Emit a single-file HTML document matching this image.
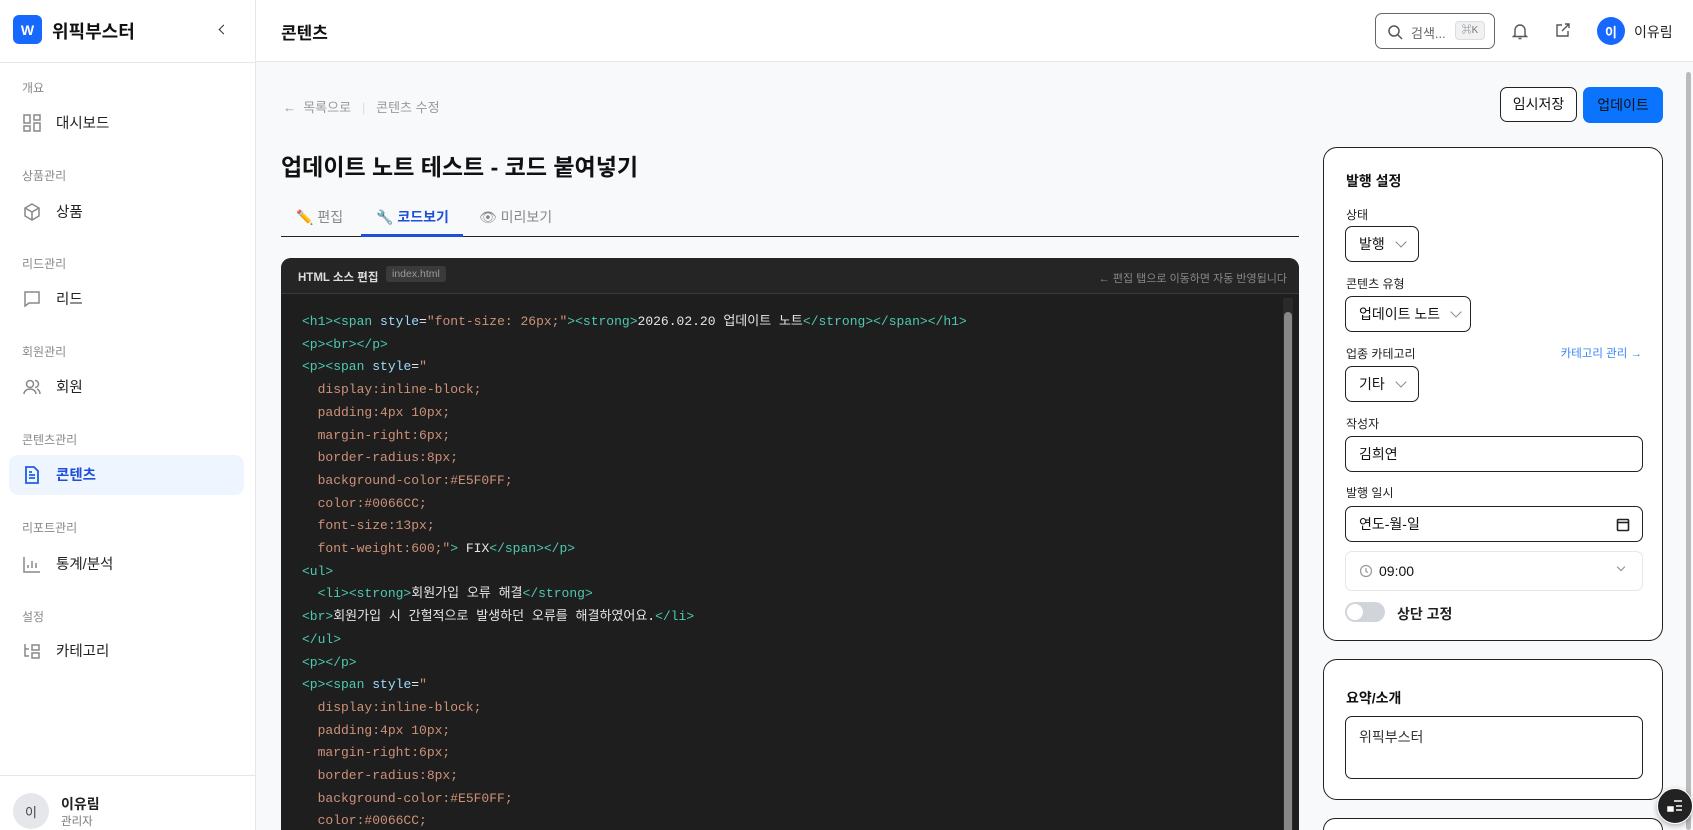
<!DOCTYPE html>
<html><head><meta charset="utf-8"><style>
*{box-sizing:border-box;margin:0;padding:0}
html,body{width:1693px;height:830px;overflow:hidden}
body{font-family:"Liberation Sans","Noto Sans CJK KR",sans-serif;background:#f8f9fb;color:#111;position:relative}
.abs{position:absolute}
.side{left:0;top:0;width:256px;height:830px;background:#fff;border-right:1px solid #e5e7eb}
.sec{position:absolute;left:22px;font-size:12px;color:#888}
.item{position:absolute;left:22px;font-size:14.5px;color:#222;display:flex;align-items:center;gap:14px}
.item svg{width:20px;height:20px;stroke:#888;fill:none;stroke-width:1.5}
.hdr{left:256px;top:0;right:0;height:62px;background:#fff;border-bottom:1px solid #e5e7eb}
.code{font-family:"Liberation Mono","Noto Sans CJK KR",monospace;font-size:13px;color:#e6e6e6;white-space:pre;line-height:22.7px}
.t{color:#4ec9b0}.a{color:#9cdcfe}.s{color:#ce9178}
.card{background:#fff;border:1px solid #222;border-radius:14px}
.lbl{position:absolute;left:22px;font-size:12px;color:#222}
.sel{position:absolute;left:21px;border:1px solid #222;border-radius:7px;height:36px;font-size:14px;display:flex;align-items:center;padding-left:13px;gap:12px}
.chev{width:8px;height:8px;border-right:1.3px solid #888;border-bottom:1.3px solid #888;transform:rotate(45deg);margin-top:-4px}
</style></head><body>
<div class="abs side">
 <div class="abs" style="left:13px;top:15px;width:29px;height:29px;background:#1668ff;border-radius:6px;color:#fff;font-weight:bold;font-size:14px;display:flex;align-items:center;justify-content:center">W</div>
 <div class="abs" style="left:52px;top:18px;font-size:18px;font-weight:bold">위픽부스터</div>
 <div class="abs" style="left:220px;top:26px;width:7px;height:7px;border-left:1.5px solid #333;border-bottom:1.5px solid #333;transform:rotate(45deg)"></div>
 <div class="abs" style="left:0;top:62px;width:256px;border-top:1px solid #e5e7eb"></div>
 <div class="sec" style="top:79px">개요</div>
 <div class="item" style="top:112px"><svg viewBox="0 0 20 20"><rect x="2" y="2" width="6" height="8"/><rect x="12" y="2" width="6" height="5"/><rect x="2" y="13" width="6" height="5"/><rect x="12" y="10" width="6" height="8"/></svg>대시보드</div>
 <div class="sec" style="top:167px">상품관리</div>
 <div class="item" style="top:201px"><svg viewBox="0 0 20 20"><path d="M10 2l7 4v8l-7 4-7-4V6z M3 6l7 4 7-4 M10 10v8"/></svg>상품</div>
 <div class="sec" style="top:255px">리드관리</div>
 <div class="item" style="top:288px"><svg viewBox="0 0 20 20"><path d="M3 3h14v11H7l-4 3z"/></svg>리드</div>
 <div class="sec" style="top:343px">회원관리</div>
 <div class="item" style="top:376px"><svg viewBox="0 0 20 20"><circle cx="8" cy="7" r="3.5"/><path d="M2 17c0-3 3-5 6-5s6 2 6 5 M13 3.5a3.5 3.5 0 010 7 M15 12c2 1 3 3 3 5"/></svg>회원</div>
 <div class="sec" style="top:431px">콘텐츠관리</div>
 <div class="abs" style="left:9px;top:455px;width:235px;height:40px;background:#eef5ff;border-radius:9px"></div>
 <div class="item" style="top:464px;color:#1d4fd8;font-weight:bold"><svg viewBox="0 0 20 20" style="stroke:#1d5fe8;stroke-width:1.8"><path d="M4 2h8l4 4v12H4z M7 10h6 M7 13h6 M7 7h3"/></svg>콘텐츠</div>
 <div class="sec" style="top:519px">리포트관리</div>
 <div class="item" style="top:553px"><svg viewBox="0 0 20 20"><path d="M2 3v15h16 M6 14v-3 M10 14V7 M14 14v-5"/></svg>통계/분석</div>
 <div class="sec" style="top:608px">설정</div>
 <div class="item" style="top:640px"><svg viewBox="0 0 20 20"><path d="M3 3v12h4 M3 8h4 M10 4h7v5h-7z M10 12h7v5h-7z"/></svg>카테고리</div>
 <div class="abs" style="left:0;top:775px;width:256px;border-top:1px solid #e5e7eb"></div>
 <div class="abs" style="left:13px;top:793px;width:36px;height:36px;border-radius:50%;background:#e5e7eb;font-size:13px;display:flex;align-items:center;justify-content:center;color:#444">이</div>
 <div class="abs" style="left:61px;top:794px;font-size:14px;font-weight:bold;color:#222">이유림</div>
 <div class="abs" style="left:61px;top:813px;font-size:11.5px;color:#777">관리자</div>
</div>
<div class="abs hdr">
 <div class="abs" style="left:25px;top:19px;font-size:17px;font-weight:bold">콘텐츠</div>
 <div class="abs" style="left:1119px;top:13px;width:120px;height:36px;border:1px solid #666;border-radius:7px;background:#fff">
  <svg class="abs" style="left:11px;top:10px" width="16" height="16" viewBox="0 0 16 16" fill="none" stroke="#555" stroke-width="1.5"><circle cx="7" cy="7" r="5"/><path d="M11 11l4 4"/></svg>
  <div class="abs" style="left:35px;top:9px;font-size:13px;color:#666">검색...</div>
  <div class="abs" style="left:79px;top:7px;width:30px;height:19px;background:#f0f1f3;border:1px solid #ddd;border-radius:4px;font-size:10px;color:#777;text-align:center;line-height:17px">⌘K</div>
 </div>
 <svg class="abs" style="left:1256px;top:22px" width="16" height="18" viewBox="0 0 16 18" fill="none" stroke="#555" stroke-width="1.4"><path d="M3 13V8a5 5 0 0110 0v5l1.5 1.5h-13z M6.5 16.5h3"/></svg>
 <svg class="abs" style="left:1299px;top:22px" width="16" height="16" viewBox="0 0 16 16" fill="none" stroke="#555" stroke-width="1.4"><path d="M7 3H2v11h11V9 M10 2h4v4 M14 2L7 9"/></svg>
 <div class="abs" style="left:1341px;top:17px;width:28px;height:28px;border-radius:50%;background:#1668ff;color:#fff;font-size:13px;font-weight:bold;display:flex;align-items:center;justify-content:center">이</div>
 <div class="abs" style="left:1378px;top:22px;font-size:14px;color:#222">이유림</div>
</div>
<div class="abs" style="left:1686px;top:72px;width:5px;height:758px;background:#bbb;border-radius:3px"></div>
<!-- main -->
<div class="abs" style="left:283px;top:97px;font-size:13px;color:#999">← &nbsp;목록으로 &nbsp;&nbsp;<span style="color:#ddd">|</span>&nbsp;&nbsp; 콘텐츠 수정</div>
<div class="abs" style="left:1500px;top:87px;width:77px;height:35px;border:1px solid #222;border-radius:7px;background:#fff;font-size:14px;text-align:center;line-height:33px">임시저장</div>
<div class="abs" style="left:1583px;top:87px;width:80px;height:36px;background:#0a74ff;border-radius:7px;font-size:14px;text-align:center;line-height:36px;color:#111">업데이트</div>
<div class="abs" style="left:281px;top:148px;font-size:23px;font-weight:bold;color:#111">업데이트 노트 테스트 - 코드 붙여넣기</div>
<div class="abs" style="left:296px;top:207px;font-size:14px;color:#888">✏️ 편집</div>
<div class="abs" style="left:376px;top:207px;font-size:14px;color:#1d4fd8;font-weight:bold"><span style="font-weight:normal">🔧</span> 코드보기</div>
<div class="abs" style="left:479px;top:207px;font-size:14px;color:#888">👁 미리보기</div>
<div class="abs" style="left:281px;top:236px;width:1018px;border-top:1.5px solid #222"></div>
<div class="abs" style="left:361px;top:234px;width:102px;height:3px;background:#1d4fd8"></div>
<div class="abs" style="left:281px;top:258px;width:1018px;height:572px;overflow:hidden;background:#1e1e1e;border-radius:10px 10px 0 0">
 <div class="abs" style="left:0;top:0;width:100%;height:36px;background:#252526;border-bottom:1px solid #3a3a3a;border-radius:10px 10px 0 0"></div>
 <div class="abs" style="left:17px;top:11px;font-size:11.5px;color:#ddd;font-weight:bold">HTML 소스 편집</div>
 <div class="abs" style="left:105px;top:8px;padding:2px 6px;background:#3a3a3a;border-radius:3px;font-size:10.5px;color:#999">index.html</div>
 <div class="abs" style="right:12px;top:12px;font-size:11px;color:#888">← 편집 탭으로 이동하면 자동 반영됩니다</div>
 <div class="abs" style="left:1002px;top:40px;width:10px;height:540px;background:#2a2a2a"></div>
 <div class="abs" style="left:1003px;top:54px;width:8px;height:540px;background:#888;border-radius:4px"></div>
 <div class="abs code" style="left:21px;top:53px"><span class="t">&lt;h1&gt;&lt;span</span> <span class="a">style</span>=<span class="s">"font-size: 26px;"</span><span class="t">&gt;&lt;strong&gt;</span>2026.02.20 업데이트 노트<span class="t">&lt;/strong&gt;&lt;/span&gt;&lt;/h1&gt;</span>
<span class="t">&lt;p&gt;&lt;br&gt;&lt;/p&gt;</span>
<span class="t">&lt;p&gt;&lt;span</span> <span class="a">style</span>=<span class="s">"
  display:inline-block;
  padding:4px 10px;
  margin-right:6px;
  border-radius:8px;
  background-color:#E5F0FF;
  color:#0066CC;
  font-size:13px;
  font-weight:600;"</span><span class="t">&gt;</span> FIX<span class="t">&lt;/span&gt;&lt;/p&gt;</span>
<span class="t">&lt;ul&gt;</span>
  <span class="t">&lt;li&gt;&lt;strong&gt;</span>회원가입 오류 해결<span class="t">&lt;/strong&gt;</span>
<span class="t">&lt;br&gt;</span>회원가입 시 간헐적으로 발생하던 오류를 해결하였어요.<span class="t">&lt;/li&gt;</span>
<span class="t">&lt;/ul&gt;</span>
<span class="t">&lt;p&gt;&lt;/p&gt;</span>
<span class="t">&lt;p&gt;&lt;span</span> <span class="a">style</span>=<span class="s">"
  display:inline-block;
  padding:4px 10px;
  margin-right:6px;
  border-radius:8px;
  background-color:#E5F0FF;
  color:#0066CC;</span></div>
</div>
<!-- right panel -->
<div class="abs card" style="left:1323px;top:147px;width:340px;height:494px">
 <div class="abs" style="left:22px;top:23px;font-size:14px;font-weight:bold">발행 설정</div>
 <div class="lbl" style="top:58px">상태</div>
 <div class="sel" style="top:78px;width:74px">발행<span class="chev"></span></div>
 <div class="lbl" style="top:127px">콘텐츠 유형</div>
 <div class="sel" style="top:148px;width:126px">업데이트 노트<span class="chev"></span></div>
 <div class="lbl" style="top:197px">업종 카테고리</div>
 <div class="abs" style="right:20px;top:197px;font-size:11.5px;color:#3b82f6">카테고리 관리 →</div>
 <div class="sel" style="top:218px;width:74px">기타<span class="chev"></span></div>
 <div class="lbl" style="top:267px">작성자</div>
 <div class="sel" style="top:288px;width:298px">김희연</div>
 <div class="lbl" style="top:336px">발행 일시</div>
 <div class="sel" style="top:358px;width:298px">연도-월-일
  <svg class="abs" style="right:12px;top:10px" width="14" height="15" viewBox="0 0 14 15" fill="none" stroke="#222" stroke-width="1.6"><rect x="1.5" y="2.5" width="11" height="11" rx="1"/><path d="M1.5 5.5h11"/></svg></div>
 <div class="sel" style="top:403px;width:298px;height:40px;border-color:#e5e7eb;gap:6px"><svg width="14" height="14" viewBox="0 0 14 14" fill="none" stroke="#999" stroke-width="1.2"><circle cx="7" cy="7" r="5.5"/><path d="M7 4v3.5l2 1"/></svg>09:00<span class="chev" style="position:absolute;right:18px;top:16px;width:6px;height:6px"></span></div>
 <div class="abs" style="left:21px;top:454px;width:40px;height:20px;background:#d1d5db;border-radius:10px"><div style="position:absolute;left:2px;top:2px;width:16px;height:16px;border-radius:50%;background:#fff"></div></div>
 <div class="abs" style="left:73px;top:456px;font-size:14px;font-weight:bold;color:#222">상단 고정</div>
</div>
<div class="abs card" style="left:1323px;top:659px;width:340px;height:141px">
 <div class="abs" style="left:22px;top:28px;font-size:14px;font-weight:bold">요약/소개</div>
 <div class="abs" style="left:21px;top:56px;width:298px;height:63px;border:1px solid #222;border-radius:7px;font-size:14px;padding:10px 13px;color:#333">위픽부스터</div>
</div>
<div class="abs card" style="left:1323px;top:818px;width:340px;height:12px;border-bottom:none;border-radius:14px 14px 0 0"></div>
<div class="abs" style="left:1657px;top:788px;width:36px;height:36px;border-radius:50%;background:#222;border:1.5px solid #fff;box-shadow:0 2px 6px rgba(0,0,0,.3)">
 <svg class="abs" style="left:9px;top:10px" width="16" height="14" viewBox="0 0 16 14" fill="none" stroke="#fff" stroke-width="1.5"><path d="M7 2h8 M9 7h6 M9 11h6"/><rect x="1" y="8" width="5" height="4" fill="#fff"/></svg>
</div>
</body></html>
